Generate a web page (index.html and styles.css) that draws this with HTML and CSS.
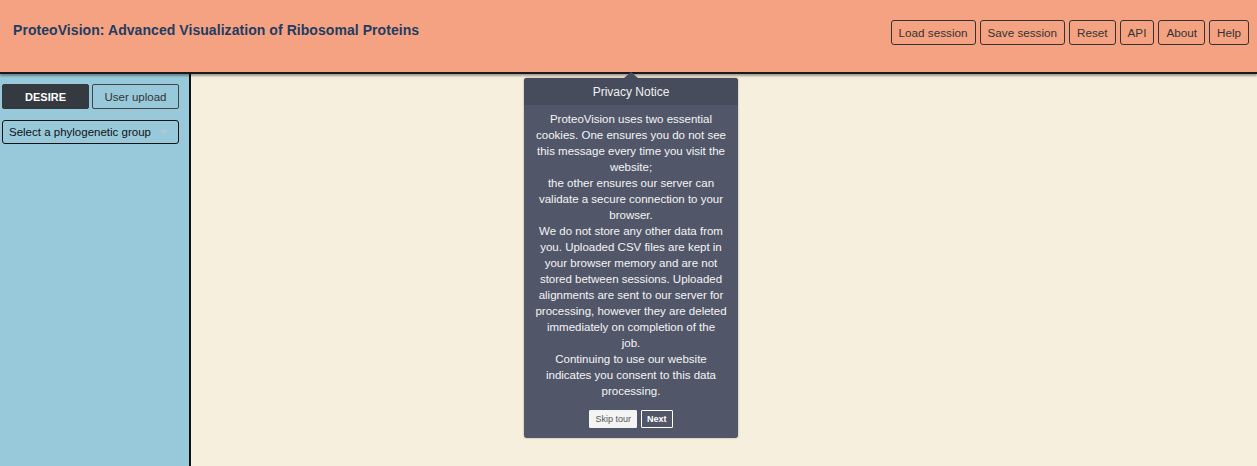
FILE: index.html
```html
<!DOCTYPE html>
<html>
<head>
<meta charset="utf-8">
<link rel="stylesheet" href="styles.css">
</head>
<body>
<div class="app">
  <header class="topbar">
    <div class="title">ProteoVision: Advanced Visualization of Ribosomal Proteins</div>
    <nav class="actions">
      <button class="hbtn">Load session</button>
      <button class="hbtn">Save session</button>
      <button class="hbtn">Reset</button>
      <button class="hbtn">API</button>
      <button class="hbtn">About</button>
      <button class="hbtn">Help</button>
    </nav>
  </header>
  <div class="content">
    <aside class="sidebar">
      <div class="tabs">
        <button class="tab active">DESIRE</button>
        <button class="tab">User upload</button>
      </div>
      <div class="select">
        <span>Select a phylogenetic group</span>
        <span class="caret"></span>
      </div>
    </aside>
    <main class="main"></main>
  </div>
  <div class="popover">
    <div class="arrow"></div>
    <div class="pop-head">Privacy Notice</div>
    <div class="pop-body">
      <p class="pop-text">ProteoVision uses two essential<br>cookies. One ensures you do not see<br>this message every time you visit the<br>website;<br>the other ensures our server can<br>validate a secure connection to your<br>browser.<br>We do not store any other data from<br>you. Uploaded CSV files are kept in<br>your browser memory and are not<br>stored between sessions. Uploaded<br>alignments are sent to our server for<br>processing, however they are deleted<br>immediately on completion of the<br>job.<br>Continuing to use our website<br>indicates you consent to this data<br>processing.</p>
      <div class="pop-actions">
        <button class="pbtn skip">Skip tour</button>
        <button class="pbtn next">Next</button>
      </div>
    </div>
  </div>
</div>
</body>
</html>
```

FILE: styles.css
```css
* { box-sizing: border-box; }
html, body { margin: 0; padding: 0; }
body {
  font-family: "Liberation Sans", Arial, sans-serif;
  width: 1257px;
  height: 466px;
  overflow: hidden;
  background: #f7efdd;
}
.app {
  position: relative;
  height: 466px;
  display: flex;
  flex-direction: column;
}
.topbar {
  height: 74px;
  background: #f4a281;
  border-bottom: 2px solid #1a1a1a;
  display: flex;
  justify-content: space-between;
  align-items: flex-start;
  padding: 0 8px 0 13px;
  position: relative;
  z-index: 2;
  box-shadow: 0 2px 2px rgba(0,0,0,0.35);
}
.title {
  margin-top: 22px;
  font-size: 14px;
  font-weight: bold;
  color: #1f3c62;
  letter-spacing: 0.06px;
}
.actions {
  display: flex;
  gap: 4px;
  margin-top: 20px;
}
.hbtn {
  height: 25px;
  padding: 0 7px;
  font-family: "Liberation Sans", Arial, sans-serif;
  font-size: 11.7px;
  color: #333;
  background: transparent;
  border: 1px solid #333;
  border-radius: 3px;
}
.content {
  flex: 1;
  display: flex;
}
.sidebar {
  width: 191px;
  background: #98c9da;
  border-right: 2px solid #111;
  padding: 10px 0 0 2px;
}
.tabs {
  display: flex;
  gap: 3px;
}
.tab {
  width: 87px;
  height: 25px;
  font-family: "Liberation Sans", Arial, sans-serif;
  font-size: 11.5px;
  color: #333;
  background: transparent;
  border: 1px solid #444;
  border-radius: 2px;
}
.tab.active {
  background: #343a40;
  border-color: #343a40;
  color: #fff;
  font-weight: bold;
  font-size: 11px;
}
.select {
  margin-top: 11px;
  width: 177px;
  height: 24px;
  border: 1px solid #111;
  border-radius: 3px;
  display: flex;
  align-items: center;
  justify-content: space-between;
  padding: 0 10px 0 6px;
  font-size: 11.5px;
  color: #111;
}
.caret {
  width: 0;
  height: 0;
  border-left: 4px solid transparent;
  border-right: 4px solid transparent;
  border-top: 4px solid #b8c4cc;
}
.main { flex: 1; }
.popover {
  position: absolute;
  left: 524px;
  top: 78px;
  width: 214px;
  background: #515769;
  border-radius: 3px;
  box-shadow: 0 0 2px rgba(0,0,0,0.35);
  z-index: 5;
  color: #fff;
}
.arrow {
  position: absolute;
  top: -6px;
  left: 100px;
  width: 0;
  height: 0;
  border-left: 7px solid transparent;
  border-right: 7px solid transparent;
  border-bottom: 6px solid #464c5c;
}
.pop-head {
  height: 27px;
  background: #464c5c;
  border-radius: 3px 3px 0 0;
  display: flex;
  align-items: center;
  justify-content: center;
  font-size: 12px;
  color: #f0f0f0;
}
.pop-body {
  padding: 6px 4px 10px;
  text-align: center;
}
.pop-text {
  margin: 0;
  font-size: 11.5px;
  line-height: 16px;
  color: #f4f4f4;
}
.pop-actions {
  display: flex;
  justify-content: center;
  gap: 4px;
  margin-top: 11px;
}
.pbtn {
  height: 18px;
  font-family: "Liberation Sans", Arial, sans-serif;
  font-size: 9px;
  padding: 0 5px;
  border-radius: 1px;
}
.pbtn.skip {
  background: #f4f4f4;
  color: #555;
  border: 1px solid #f4f4f4;
}
.pbtn.next {
  background: transparent;
  color: #fff;
  border: 1px solid #fff;
  font-weight: bold;
}
```
